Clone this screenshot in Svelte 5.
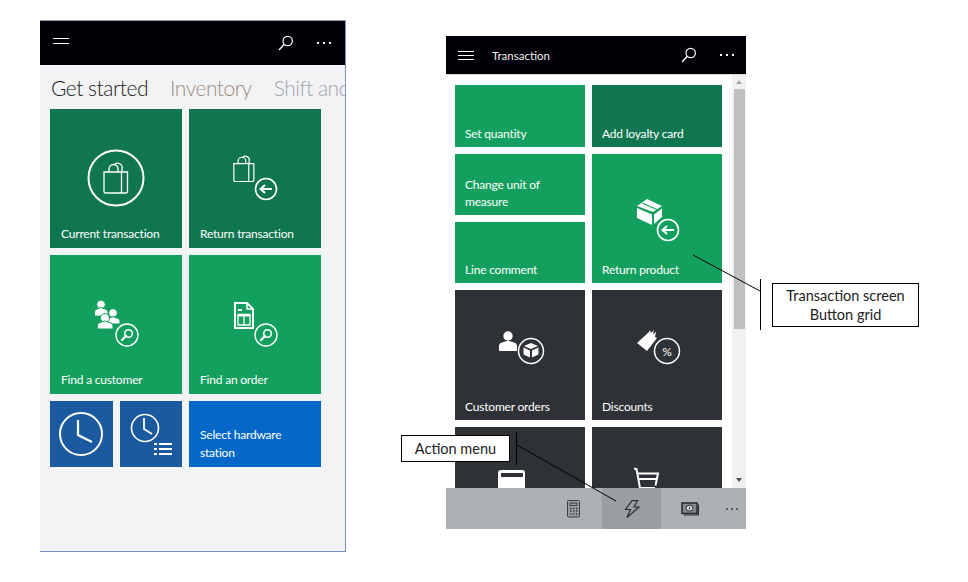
<script>
  const bag = "M1 9h17.500v19.500a1.500 1.500 0 0 1-1.500 1.500H2.500A1.500 1.500 0 0 1 1 28.500zM18.500 9H24.500V28.500a1.500 1.500 0 0 1-1.500 1.500H17M6 9V6a4.500 4.500 0 0 1 9 0v3M11 2.200a4.500 4.500 0 0 1 8 3.800v3";
</script>

{#snippet search(x, y, r)}
  <g transform="translate({x} {y}) scale({r / 11})" fill="none" stroke="#fff">
    <circle r="11" stroke-width="1.400" />
    <circle cx="1.500" cy="-1.500" r="3.800" stroke-width="1.600" />
    <path d="M-1 1 L-5 5" stroke-width="2.200" stroke-linecap="round" />
  </g>
{/snippet}

{#snippet back(x, y, r)}
  <g transform="translate({x} {y})" fill="none" stroke="#fff">
    <circle {r} stroke-width="1.600" />
    <path d="M6 0H-5M-1 -4L-5.500 0L-1 4" stroke-width="2" />
  </g>
{/snippet}

{#snippet topbar(title, lines)}
  <button class="burger" aria-label="Menu">{#each lines as l (l)}<i></i>{/each}</button>
  {#if title}<span class="title">{title}</span>{/if}
  <svg class="find" width="16" height="16" viewBox="0 0 16 16" fill="none" stroke="#fff" aria-hidden="true">
    <circle cx="9.700" cy="6" r="4.700" stroke-width="1.200" />
    <path d="M6.300 9.300L1 15" stroke-width="1.400" />
  </svg>
  <span class="more"><i></i><i></i><i></i></span>
{/snippet}

<div class="page">
  <section class="phone-a">
    <header class="bar-a">{@render topbar("", [1, 2])}</header>
    <nav class="tabs">
      <span class="on">Get started</span>
      <span class="t2">Inventory</span>
      <span class="t3">Shift and drawer</span>
    </nav>
    <div class="grid-a">
      <div class="tile deep">
        <svg width="132" height="110" fill="none" stroke="#fff" aria-hidden="true">
          <circle cx="66" cy="69" r="27.500" stroke-width="2" />
          <path transform="translate(53 54)" d={bag} stroke-width="1.300" />
        </svg>
        <span class="lab">Current transaction</span>
      </div>
      <div class="tile deep">
        <svg width="132" height="110" fill="none" stroke="#fff" aria-hidden="true">
          <path transform="translate(44 47) scale(.85)" d={bag} stroke-width="1.400" />
          {@render back(77, 80, 10.500)}
        </svg>
        <span class="lab">Return transaction</span>
      </div>
      <div class="tile green">
        <svg width="132" height="110" aria-hidden="true">
          <g fill="#fff" stroke="#13a05e" stroke-width="1">
            <circle cx="51" cy="49.500" r="4.300" />
            <path d="M44.500 61v-4q0-2.500 2.500-3l4-1.500 4 1.500q3 .5 3 3v4z" />
            <circle cx="63" cy="58" r="4.300" />
            <path d="M56.500 69v-3q0-2.500 2.500-3l4-1.500 4 1.500q3 .5 3 3v3z" />
            <circle cx="55" cy="63" r="4.500" />
            <path d="M47.500 74v-3.500q0-2.500 2.500-3l5-1.500 5 1.500q3 .5 3 3v3.500z" />
          </g>
          {@render search(77, 80, 11)}
        </svg>
        <span class="lab">Find a customer</span>
      </div>
      <div class="tile green">
        <svg width="132" height="110" fill="none" stroke="#fff" aria-hidden="true">
          <path d="M46 48h12l6 6v19H46z" stroke-width="2" />
          <path d="M58 48v6h6" stroke-width="1.500" />
          <path d="M49 54h4v2h-4z" fill="#fff" stroke="none" />
          <path d="M49 59.500h12v10.500h-12zM55 59.500v10.500" stroke-width="1.300" />
          <path d="M49 59.500h12v2h-12z" fill="#fff" stroke="none" />
          {@render search(77, 80, 11)}
        </svg>
        <span class="lab">Find an order</span>
      </div>
      <div class="pair">
        <div class="tile navy">
          <svg width="63" height="66" fill="none" stroke="#fff" aria-hidden="true">
            <circle cx="31" cy="33" r="21" stroke-width="2" />
            <path d="M28 19V34L42 41" stroke-width="2.200" />
          </svg>
        </div>
        <div class="tile navy">
          <svg width="62" height="66" fill="none" stroke="#fff" aria-hidden="true">
            <circle cx="25" cy="27" r="13.500" stroke-width="1.600" />
            <path d="M24 17V28L32 33" stroke-width="1.800" />
            <path d="M34 43h3M39 43h13M34 48h3M39 48h13M34 53h3M39 53h13" stroke-width="2" />
          </svg>
        </div>
      </div>
      <div class="tile blue"><span class="lab two">Select hardware station</span></div>
    </div>
  </section>

  <section class="phone-b">
    <header class="bar-b">{@render topbar("Transaction", [1, 2, 3])}</header>
    <div class="body">
      <div class="grid-b">
        <div class="tile green"><span class="lab">Set quantity</span></div>
        <div class="tile deep"><span class="lab">Add loyalty card</span></div>
        <div class="tile green"><span class="lab">Change unit of measure</span></div>
        <div class="tile green tall">
          <svg width="130" height="100" aria-hidden="true">
            <path d="M55 45l15 7-9 6-16-6z" fill="#fff" />
            <path d="M50 49l15 6.500" stroke="#13a05e" stroke-width="1.200" fill="none" />
            <path d="M45 54l15 6.500v10.500l-15-7zM62 60.500l8-6v8.500l-8 7z" fill="#fff" />
            {@render back(76, 76, 10.500)}
          </svg>
          <span class="lab">Return product</span>
        </div>
        <div class="tile green"><span class="lab">Line comment</span></div>
        <div class="tile dark">
          <svg width="130" height="100" aria-hidden="true">
            <circle cx="53" cy="46" r="4.700" fill="#fff" />
            <path d="M44 61v-5q0-3 3-3.500l5-1.500h2l5 1.500q3 .5 3 3.500v5z" fill="#fff" />
            <circle cx="76" cy="61" r="12.500" fill="none" stroke="#fff" stroke-width="1.500" />
            <path d="M76 53l7 3-7 3-7-3zM68.500 57.500l6.500 3v7l-6.500-3zM77 60.500l6.500-3v7l-6.500 3z" fill="#fff" />
          </svg>
          <span class="lab">Customer orders</span>
        </div>
        <div class="tile dark">
          <svg width="130" height="100" aria-hidden="true">
            <path d="M45 53l12-11 1-2 1 3 3-3-1 4 3-2-1 5 2 1-10 13z" fill="#fff" />
            <circle cx="75" cy="61" r="12.500" fill="none" stroke="#fff" stroke-width="1.500" />
            <text x="75" y="65.500" text-anchor="middle" class="pct">%</text>
          </svg>
          <span class="lab">Discounts</span>
        </div>
        <div class="tile dark">
          <svg width="130" height="62" aria-hidden="true">
            <rect x="43" y="43" width="27" height="24" rx="3" fill="#fff" />
            <rect x="46" y="46" width="22" height="4" fill="#2e3136" />
          </svg>
        </div>
        <div class="tile dark">
          <svg width="130" height="62" fill="none" stroke="#fff" stroke-width="2" aria-hidden="true">
            <path d="M42 41.500l2.500.5 3.500 19h15" />
            <path d="M45 46.500h21l-2.500 12M46 52h19" />
          </svg>
        </div>
      </div>
      <div class="scroll">
        <span class="up"></span>
        <span class="thumb"></span>
        <span class="down"></span>
      </div>
    </div>
    <footer class="actions">
      <span class="act">
        <svg width="13" height="18" fill="none" stroke="#3c3f44" aria-hidden="true">
          <rect x=".5" y=".5" width="12" height="16.500" rx="1" fill="#9b9ea2" />
          <path d="M3 3h7v2.500H3z" />
          <path d="M3 8.500h1.500M6 8.500h1.500M9 8.500h1.500M3 11h1.500M6 11h1.500M9 11h1.500M3 14h1.500M6 14h1.500M9 14h1.500" stroke-width="1.600" />
        </svg>
      </span>
      <span class="act active">
        <svg width="16" height="18" fill="none" stroke="#2b2d31" stroke-width="1.200" aria-hidden="true">
          <path d="M8 .7h5.500L10 7h5L3 17.500l3.500-8H1.500z" />
        </svg>
      </span>
      <span class="act money">
        <svg width="18" height="14" fill="none" stroke="#2b2d31" aria-hidden="true">
          <rect x="1" y="1" width="15" height="10.500" stroke-width="1.600" fill="#85888c" />
          <path d="M17.500 2.500V13H3" stroke-width="1" />
          <ellipse cx="8.500" cy="6.200" rx="3.500" ry="3" fill="#d6d8da" />
          <path d="M8.500 5v2.500" stroke-width="1" />
        </svg>
      </span>
      <span class="dots"><i></i><i></i><i></i></span>
    </footer>
  </section>

  <div class="note note-a">Transaction screen<br />Button grid</div>
  <div class="note note-b">Action menu</div>
  <svg class="leaders" width="968" height="582" fill="none" stroke="#000" aria-hidden="true">
    <path d="M693 255L760 291M760.500 279V330M516.500 432V465M517 445L616 501" />
  </svg>
</div>

<style>
  :global(body) { margin: 0; background: #fff; }
  .page {
    position: relative;
    width: 968px;
    height: 582px;
    display: flex;
    align-items: flex-start;
    padding-left: 40px;
    gap: 100px;
    box-sizing: border-box;
    overflow: hidden;
    font-family: Lato, "Open Sans", sans-serif;
  }
  i { display: block; }

  .phone-a {
    width: 306px;
    height: 532px;
    margin-top: 20px;
    box-sizing: border-box;
    background: #f2f3f5;
    border-top: 1px solid #9a9da6;
    border-right: 1px solid #7392c6;
    border-bottom: 1px solid #7392c6;
    overflow: hidden;
  }
  .bar-a, .bar-b {
    display: flex;
    align-items: center;
    background: #000006;
    color: #fff;
  }
  .bar-a { height: 44px; padding: 0 14px 0 13px; }
  .bar-b { height: 38px; padding: 0 12px 0 12px; }
  .burger {
    all: unset;
    width: 16px;
    display: flex;
    flex-direction: column;
    gap: 4px;
  }
  .bar-a .burger { margin-bottom: 4px; }
  .burger i { height: 1px; background: #fff; }
  .bar-b .burger { width: 16px; gap: 3px; }
  .title { margin-left: 18px; font-size: 11.500px; font-weight: 400; color: #eee; }
  .find { margin-left: auto; }
  .more { display: flex; gap: 4px; margin-left: 23px; }
  .more i { width: 2px; height: 2px; background: #fff; }

  .tabs {
    display: flex;
    gap: 22px;
    padding: 8px 0 0 11px;
    height: 44px;
    box-sizing: border-box;
    white-space: nowrap;
    font-size: 21px;
    letter-spacing: -0.5px;
    font-weight: 300;
    line-height: 30px;
    color: #222;
  }
  .t2 { color: #9c8d80; }
  .t3 { color: #a3a5aa; }

  .grid-a {
    display: grid;
    grid-template-columns: 132px 132px;
    grid-template-rows: 139px 139px 66px;
    gap: 7px;
    margin-left: 10px;
  }
  .pair { display: grid; grid-template-columns: 63px 62px; gap: 7px; }
  .grid-b {
    display: grid;
    grid-template-columns: 130px 130px;
    grid-template-rows: 62px 61px 61px 130px 130px;
    gap: 7px;
    padding: 10px 0 0 9px;
    height: 413px;
    box-sizing: border-box;
  }
  .tall { grid-row: span 2; }

  .tile {
    display: flex;
    flex-direction: column;
    justify-content: flex-end;
    min-width: 0;
    color: #fff;
    overflow: hidden;
  }
  .tile svg { display: block; flex: none; margin-bottom: auto; }
  .deep { background: #107650; }
  .green { background: #13a05e; }
  .navy { background: #1b5a9e; }
  .blue { background: #0568c9; }
  .dark { background: #2e3136; }

  .lab {
    display: block;
    padding: 0 6px 6px 11px;
    font-size: 12px;
    letter-spacing: -0.2px;
    line-height: 17px;
  }
  .grid-b .lab { padding: 0 6px 5px 10px; }
  .grid-a .two { line-height: 18px; padding-bottom: 5px; }
  .pct { fill: #fff; font-size: 12px; }

  .phone-b { width: 300px; margin-top: 36px; background: #fff; }
  .bar-b { border-bottom: 1px solid #d8d8d8; box-sizing: content-box; }
  .body { display: flex; height: 413px; overflow: hidden; justify-content: space-between; }
  .scroll {
    width: 14px;
    background: #f1f1f1;
    display: flex;
    flex-direction: column;
    align-items: center;
  }
  .thumb { width: 11px; height: 240px; background: #c0c0c0; margin-top: 5px; }
  .up, .down { width: 0; height: 0; border: 3.500px solid transparent; }
  .up { border-bottom: 4px solid #a6a6a6; border-top: 0; margin-top: 5px; }
  .down { border-top: 4px solid #505050; border-bottom: 0; margin-top: auto; margin-bottom: 6px; }

  .actions {
    display: flex;
    justify-content: flex-end;
    height: 41px;
    background: #adb0b5;
  }
  .act {
    width: 58px;
    display: flex;
    align-items: center;
    justify-content: center;
  }
  .active { width: 59px; background: #9a9da1; }
  .money { width: 57px; }
  .dots { width: 28px; display: flex; align-items: center; justify-content: center; gap: 3px; }
  .dots i { width: 2px; height: 2px; background: #55585c; }

  .note {
    position: absolute;
    box-sizing: border-box;
    background: #fff;
    border: 1px solid #000;
    color: #222;
    text-align: center;
    font-size: 14.500px;
    line-height: 19px;
  }
  .note-a { left: 772px; top: 283px; width: 147px; height: 44px; padding-top: 2px; }
  .note-b { left: 401px; top: 435px; width: 109px; height: 27px; padding-top: 3px; }
  .leaders { position: absolute; left: 0; top: 0; pointer-events: none; }
</style>
